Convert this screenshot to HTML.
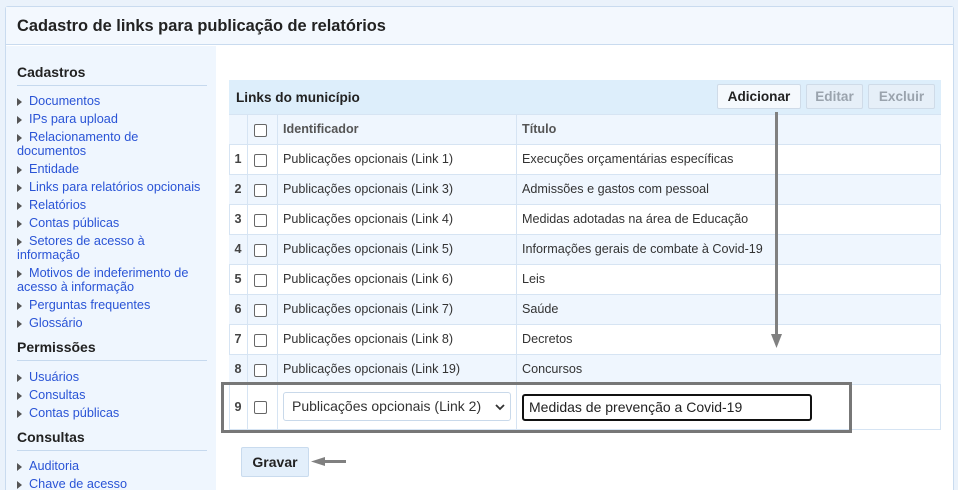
<!DOCTYPE html>
<html><head><meta charset="utf-8"><style>
*{box-sizing:border-box;margin:0;padding:0}
html,body{width:958px;height:490px;overflow:hidden}
body{background:#eaf2fb;font-family:"Liberation Sans",Arial,sans-serif;position:relative}
.a{position:absolute}
.panel{left:5px;top:6px;width:949px;height:490px;background:#fff;border:1px solid #c9dbef;border-radius:3px}
.hdr{left:6px;top:7px;width:947px;height:38px;background:#f3f8fe;border-bottom:1px solid #c9dbef}
.hdr span{position:absolute;left:11px;top:10px;font-size:16.4px;font-weight:bold;color:#222}
.side{left:6px;top:46px;width:210px;height:444px;background:#eff6fe}
.sh{font-size:14px;font-weight:bold;color:#222;left:17px}
.sl{left:17px;width:190px;height:1px;background:#c6d9ee}
.lk{left:17px;font-size:12.7px;color:#2a54d6;line-height:14px;width:182px}
.lk:before{content:"";display:inline-block;width:0;height:0;border-left:5px solid #555;border-top:4px solid transparent;border-bottom:4px solid transparent;margin-right:7px;vertical-align:-1px}
.tbl{left:229px;top:80px;width:712px;height:350px;border:1px solid #d6e4f3;background:#fff}
.th{left:229px;top:80px;width:712px;height:34px;background:#ddeefb}
.th span{position:absolute;left:7px;top:10px;font-size:13.6px;font-weight:bold;color:#222}
.btn{top:84px;height:25px;border:1px solid #cfdbe8;border-radius:2px;font-size:13.6px;font-weight:bold;text-align:center;line-height:23px}
.row{left:229px;width:712px;height:30px;border-top:1px solid #d6e4f3;font-size:12.6px;color:#333}
.row div{position:absolute;top:0;height:100%}
.n{left:0;width:19px;border-right:1px solid #d6e4f3;font-weight:bold;text-align:center;line-height:28px;color:#444}
.c{left:19px;width:30px;border-right:1px solid #d6e4f3}
.c i{position:absolute;left:6px;top:9px;width:13px;height:13px;border:1px solid #666;border-radius:2px;background:#fff}
.id{left:49px;width:239px;border-right:1px solid #d6e4f3;padding-left:5px;line-height:28px}
.ti{left:288px;padding-left:5px;line-height:28px}
.alt{background:#eff6fe}
</style></head><body>
<div class="a panel"></div>
<div class="a hdr"><span>Cadastro de links para publicação de relatórios</span></div>
<div class="a side"></div>
<div class="a sh" style="top:64px">Cadastros</div>
<div class="a sl" style="top:85px"></div>
<div class="a lk" style="top:94px">Documentos</div>
<div class="a lk" style="top:112px">IPs para upload</div>
<div class="a lk" style="top:130px">Relacionamento de documentos</div>
<div class="a lk" style="top:162px">Entidade</div>
<div class="a lk" style="top:180px;white-space:nowrap;width:200px">Links para relatórios opcionais</div>
<div class="a lk" style="top:198px">Relatórios</div>
<div class="a lk" style="top:216px">Contas públicas</div>
<div class="a lk" style="top:234px">Setores de acesso à informação</div>
<div class="a lk" style="top:266px">Motivos de indeferimento de acesso à informação</div>
<div class="a lk" style="top:298px">Perguntas frequentes</div>
<div class="a lk" style="top:316px">Glossário</div>
<div class="a sh" style="top:339px">Permissões</div>
<div class="a sl" style="top:360px"></div>
<div class="a lk" style="top:370px">Usuários</div>
<div class="a lk" style="top:388px">Consultas</div>
<div class="a lk" style="top:406px">Contas públicas</div>
<div class="a sh" style="top:429px">Consultas</div>
<div class="a sl" style="top:450px"></div>
<div class="a lk" style="top:459px">Auditoria</div>
<div class="a lk" style="top:477px">Chave de acesso</div>

<div class="a tbl"></div>
<div class="a th"><span>Links do município</span></div>
<div class="a btn" style="left:717px;width:84px;background:#f5f9fd;color:#222">Adicionar</div>
<div class="a btn" style="left:806px;width:57px;background:#e6eff8;color:#9aa3ad">Editar</div>
<div class="a btn" style="left:868px;width:67px;background:#e6eff8;color:#9aa3ad">Excluir</div>

<div class="a row alt" style="top:114px;font-weight:bold;color:#555"><div class="n"></div><div class="c"><i></i></div><div class="id">Identificador</div><div class="ti">Título</div></div>
<div class="a row" style="top:144px"><div class="n">1</div><div class="c"><i></i></div><div class="id">Publicações opcionais (Link 1)</div><div class="ti">Execuções orçamentárias específicas</div></div>
<div class="a row alt" style="top:174px"><div class="n">2</div><div class="c"><i></i></div><div class="id">Publicações opcionais (Link 3)</div><div class="ti">Admissões e gastos com pessoal</div></div>
<div class="a row" style="top:204px"><div class="n">3</div><div class="c"><i></i></div><div class="id">Publicações opcionais (Link 4)</div><div class="ti">Medidas adotadas na área de Educação</div></div>
<div class="a row alt" style="top:234px"><div class="n">4</div><div class="c"><i></i></div><div class="id">Publicações opcionais (Link 5)</div><div class="ti">Informações gerais de combate à Covid-19</div></div>
<div class="a row" style="top:264px"><div class="n">5</div><div class="c"><i></i></div><div class="id">Publicações opcionais (Link 6)</div><div class="ti">Leis</div></div>
<div class="a row alt" style="top:294px"><div class="n">6</div><div class="c"><i></i></div><div class="id">Publicações opcionais (Link 7)</div><div class="ti">Saúde</div></div>
<div class="a row" style="top:324px"><div class="n">7</div><div class="c"><i></i></div><div class="id">Publicações opcionais (Link 8)</div><div class="ti">Decretos</div></div>
<div class="a row alt" style="top:354px"><div class="n">8</div><div class="c"><i></i></div><div class="id">Publicações opcionais (Link 19)</div><div class="ti">Concursos</div></div>
<div class="a row" style="top:384px;height:45px"><div class="n" style="line-height:44px">9</div><div class="c"><i style="top:16px"></i></div><div class="id"></div><div class="ti"></div></div>

<div class="a" style="left:283px;top:392px;width:228px;height:29px;border:1px solid #c9d9ea;border-radius:3px;background:#fff;font-size:14px;color:#333;padding-left:8px;line-height:27px">Publicações opcionais (Link 2)<svg class="a" style="left:211px;top:11px" width="10" height="7" viewBox="0 0 10 7"><path d="M1 1L5 5L9 1" fill="none" stroke="#333" stroke-width="1.8"/></svg></div>
<div class="a" style="left:522px;top:394px;width:290px;height:27px;border:2px solid #111;border-radius:3px;background:#fff;font-size:14px;color:#222;padding-left:5px;line-height:23px">Medidas de prevenção a Covid-19</div>

<div class="a" style="left:221px;top:382px;width:631px;height:51px;border:3px solid #777"></div>

<div class="a" style="left:241px;top:447px;width:68px;height:30px;background:#e3effb;border:1px solid #c9dbee;border-radius:2px;font-size:14px;font-weight:bold;color:#222;text-align:center;line-height:28px">Gravar</div>

<svg class="a" style="left:0;top:0" width="958" height="490">
<line x1="776.5" y1="112" x2="776.5" y2="336" stroke="#808080" stroke-width="3"/>
<path d="M771 334L782 334L776.5 348Z" fill="#808080"/>
<line x1="324" y1="461.5" x2="346" y2="461.5" stroke="#808080" stroke-width="3"/>
<path d="M311 461.5L325 457L325 466Z" fill="#808080"/>
</svg>
</body></html>
